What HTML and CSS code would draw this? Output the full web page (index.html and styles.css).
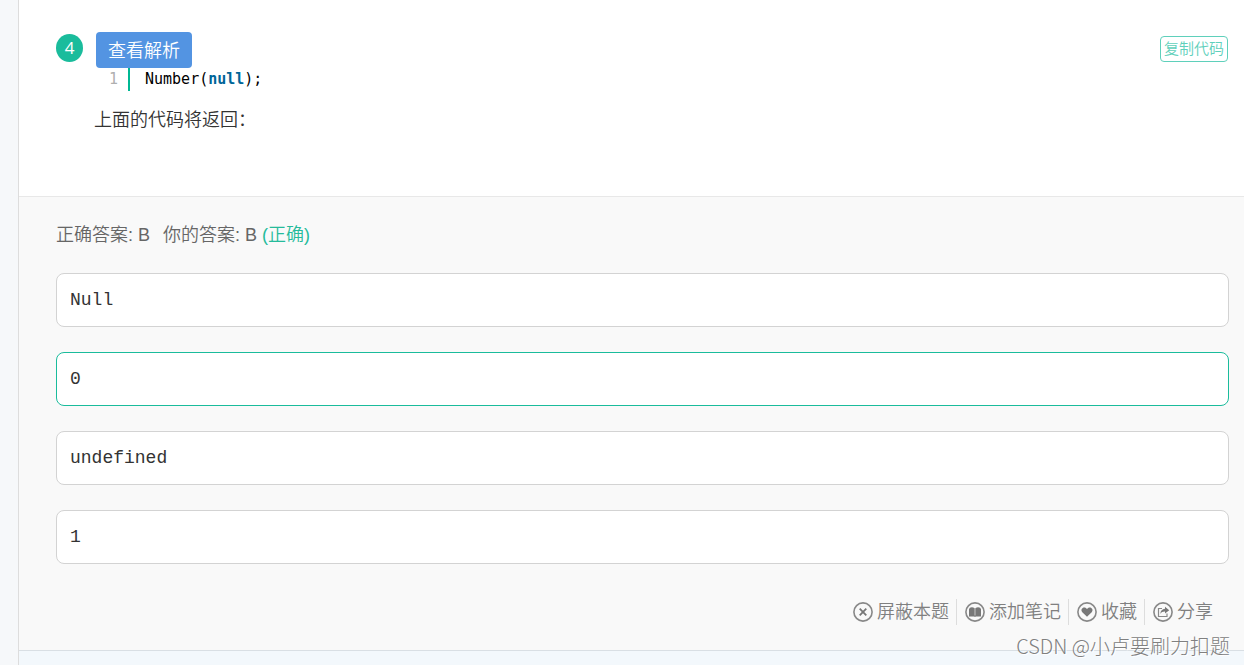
FILE: index.html
```html
<!DOCTYPE html>
<html lang="zh-CN">
<head>
<meta charset="utf-8">
<title>查看解析</title>
<link rel="stylesheet" href="styles.css">
</head>
<body>
<main class="page">
  <section class="question">
    <span class="number">4</span>
    <div class="stem">
      <button class="analysis" type="button">查看解析</button>
      <div class="code"><span class="line-no">1</span><code class="source">Number(<b class="keyword">null</b>);</code></div>
      <p class="prompt">上面的代码将返回：</p>
    </div>
    <button class="copy" type="button">复制代码</button>
  </section>
  <section class="answers">
    <p class="result"><span>正确答案: B</span><span>你的答案: B <span class="correct">(正确)</span></span></p>
    <ul class="options">
      <li class="option">Null</li>
      <li class="option chosen">0</li>
      <li class="option">undefined</li>
      <li class="option">1</li>
    </ul>
    <div class="actions">
      <button class="action" type="button">
        <svg class="icon" viewBox="0 0 20 20" aria-hidden="true"><circle cx="10" cy="10" r="9.1"/><path class="thick" d="M6.700 6.700l6.600 6.600M13.300 6.700l-6.600 6.600"/></svg>屏蔽本题</button>
      <button class="action" type="button">
        <svg class="icon" viewBox="0 0 20 20" aria-hidden="true"><circle cx="10" cy="10" r="9.1"/><path class="solid" d="M9.700 6.200C8 5 6.200 5 4.800 5.800V6.600H4V14.400H9.200L10 15l.8-.6H16V6.600h-.8V5.800C13.800 5 12 5 10.300 6.200V13.600H9.700z"/></svg>添加笔记</button>
      <button class="action" type="button">
        <svg class="icon" viewBox="0 0 20 20" aria-hidden="true"><circle cx="10" cy="10" r="9.1"/><path class="solid" d="M10 14.800L5.300 10.200C3.400 7.900 5.100 5.500 7.200 5.500c1.200 0 2.200.6 2.800 1.600.6-1 1.600-1.600 2.800-1.600 2.100 0 3.800 2.400 1.900 4.700z"/></svg>收藏</button>
      <button class="action" type="button">
        <svg class="icon" viewBox="0 0 20 20" aria-hidden="true"><circle cx="10" cy="10" r="9.1"/><path class="thin" d="M9 6.500H5.500V14.500H14V11.500"/><path class="solid" d="M12 4.800L16.200 8.200L12 11.500V9.600C9.800 9.500 8.500 10.200 7.300 12C7.500 8.800 9.300 7 12 6.800z"/></svg>分享</button>
    </div>
  </section>
  <div class="next"></div>
</main>
<div class="watermark">CSDN @小卢要刷力扣题</div>
</body>
</html>
```
FILE: styles.css
```css
* { box-sizing: border-box; }
body {
  margin: 0;
  background: #f6f8fa;
  color: #333;
  font: 350 18px/26px "Liberation Sans", "Noto Sans CJK SC", sans-serif;
}
button {
  font: inherit;
  cursor: pointer;
}
.page {
  display: flex;
  flex-direction: column;
  min-height: 100vh;
  margin-left: 18px;
  border-left: 1px solid #ddd;
}
.question {
  display: flex;
  align-items: flex-start;
  padding: 32px 16px 63px 37px;
  background: #fff;
}
.number {
  width: 27px;
  height: 28px;
  margin-top: 2px;
  border-radius: 50%;
  background: #1abc9c;
  color: #fff;
  font-family: "Open Sans", sans-serif;
  font-size: 17px;
  font-weight: 400;
  line-height: 27px;
  text-align: center;
}
.stem {
  flex: 1;
  padding-left: 11px;
}
.analysis {
  display: block;
  height: 36px;
  margin-left: 2px;
  padding: 2px 12px 0;
  border: 0;
  border-radius: 4px;
  background: #5394e2;
  color: #fff;
}
.code {
  display: flex;
  font: 400 15px/23px "DejaVu Sans Mono", monospace;
}
.line-no {
  width: 36px;
  padding-right: 10px;
  border-right: 2px solid #00b894;
  color: #afafaf;
  text-align: right;
}
.source {
  padding-left: 15px;
  color: #000;
  font: inherit;
}
.keyword { color: #069; }
.prompt {
  margin: 16px 0 0;
}
.copy {
  height: 26px;
  margin-top: 4px;
  padding: 0 3px;
  border: 1px solid #5fd0bb;
  border-radius: 4px;
  background: #fff;
  color: #5fd0bb;
  font-size: 15px;
  line-height: 24px;
}
.answers {
  padding: 25px 15px 25px 37px;
  border-top: 1px solid #e8e8e8;
  border-bottom: 1px solid #d9dfe4;
  background: #f9f9f9;
}
.result {
  display: flex;
  gap: 13px;
  margin: 0;
  color: #666;
}
.correct { color: #25bb9b; }
.options {
  display: grid;
  gap: 25px;
  margin: 25px 0 35px;
  padding: 0;
  list-style: none;
}
.option {
  padding: 13px;
  border: 1px solid #d3d3d3;
  border-radius: 8px;
  background: #fff;
  color: #333;
  font-family: "Liberation Mono", monospace;
}
.chosen { border-color: #1abc9c; }
.actions {
  display: flex;
  justify-content: flex-end;
  padding-right: 9px;
}
.action {
  display: flex;
  align-items: center;
  gap: 4px;
  padding: 0 7px 0 8px;
  border: 0;
  border-left: 1px solid #ddd;
  background: none;
  color: #808080;
}
.action:first-child { border-left: 0; }
.icon {
  width: 20px;
  height: 20px;
  fill: none;
  stroke: #888;
  stroke-width: 1.6;
}
.icon .thick { stroke: #777; stroke-width: 1.8; }
.icon .thin { stroke-width: 1.2; }
.icon .solid { fill: #777; stroke: none; }
.next {
  flex: 1;
  background: #f3f8fc;
}
.watermark {
  position: absolute;
  right: 14px;
  bottom: 6px;
  color: #808080;
  font-family: "Noto Sans CJK SC", sans-serif;
  font-size: 20px;
  font-weight: 300;
  text-shadow: 1px 1px 0 #fff;
}
```
